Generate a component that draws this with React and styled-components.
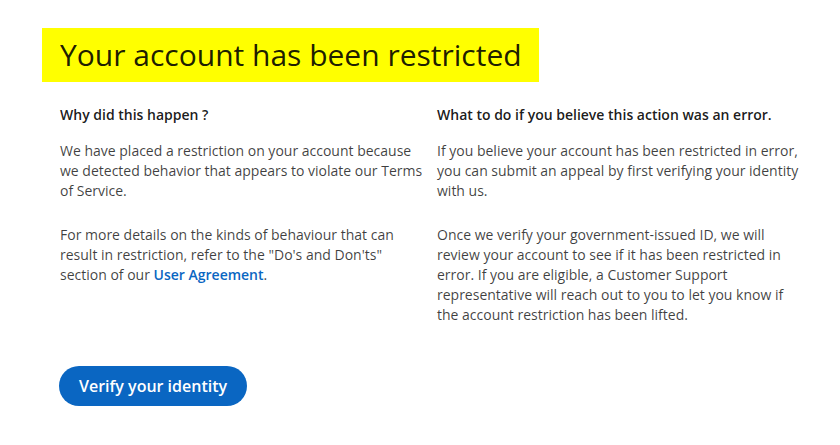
import React from 'react';
import styled, { createGlobalStyle } from 'styled-components';

const GlobalStyle = createGlobalStyle`
  body {
    margin: 0;
    background: #ffffff;
    font-family: "Open Sans", "Noto Sans", sans-serif;
  }
`;

const Page = styled.div`
  padding: 28px 0 0 42px;
  width: 798px;
  box-sizing: border-box;
`;

const Title = styled.h1`
  display: inline-block;
  margin: 0;
  background: #ffff00;
  padding: 5px 17px 5px 18px;
  font-size: 30px;
  font-weight: 400;
  line-height: 44px;
  color: rgba(0, 0, 0, 0.9);
`;

const Columns = styled.div`
  display: grid;
  grid-template-columns: 377px 372px;
  padding: 23px 0 0 18px;
`;

const Column = styled.section`
  display: flex;
  flex-direction: column;
  max-width: ${(p) => p.$width}px;
`;

const Heading = styled.h2`
  margin: 0 0 16px;
  font-size: 14px;
  font-weight: 600;
  line-height: 20px;
  color: rgba(0, 0, 0, 0.9);
`;

const Text = styled.p`
  margin: 0 0 24px;
  font-size: 14px;
  line-height: 20px;
  color: rgba(0, 0, 0, 0.75);
`;

const Link = styled.a`
  color: #0a66c2;
  font-weight: 600;
  text-decoration: none;
`;

const Button = styled.button`
  margin: 17px 0 0 17px;
  height: 40px;
  padding: 0 20px;
  border: none;
  border-radius: 20px;
  background: #0a66c2;
  color: #ffffff;
  font-family: inherit;
  font-size: 16px;
  font-weight: 600;
  cursor: pointer;
`;

export default function App() {
  return (
    <>
      <GlobalStyle />
      <Page>
        <Title>Your account has been restricted</Title>
        <Columns>
          <Column $width={372}>
            <Heading>Why did this happen ?</Heading>
            <Text>
              We have placed a restriction on your account because we detected behavior that
              appears to violate our Terms of Service.
            </Text>
            <Text>
              For more details on the kinds of behaviour that can result in restriction, refer to
              the "Do's and Don'ts" section of our <Link href="#">User Agreement</Link>.
            </Text>
          </Column>
          <Column $width={365}>
            <Heading>What to do if you believe this action was an error.</Heading>
            <Text>
              If you believe your account has been restricted in error, you can submit an appeal
              by first verifying your identity with us.
            </Text>
            <Text>
              Once we verify your government-issued ID, we will review your account to see if it
              has been restricted in error. If you are eligible, a Customer Support representative
              will reach out to you to let you know if the account restriction has been lifted.
            </Text>
          </Column>
        </Columns>
        <Button>Verify your identity</Button>
      </Page>
    </>
  );
}
